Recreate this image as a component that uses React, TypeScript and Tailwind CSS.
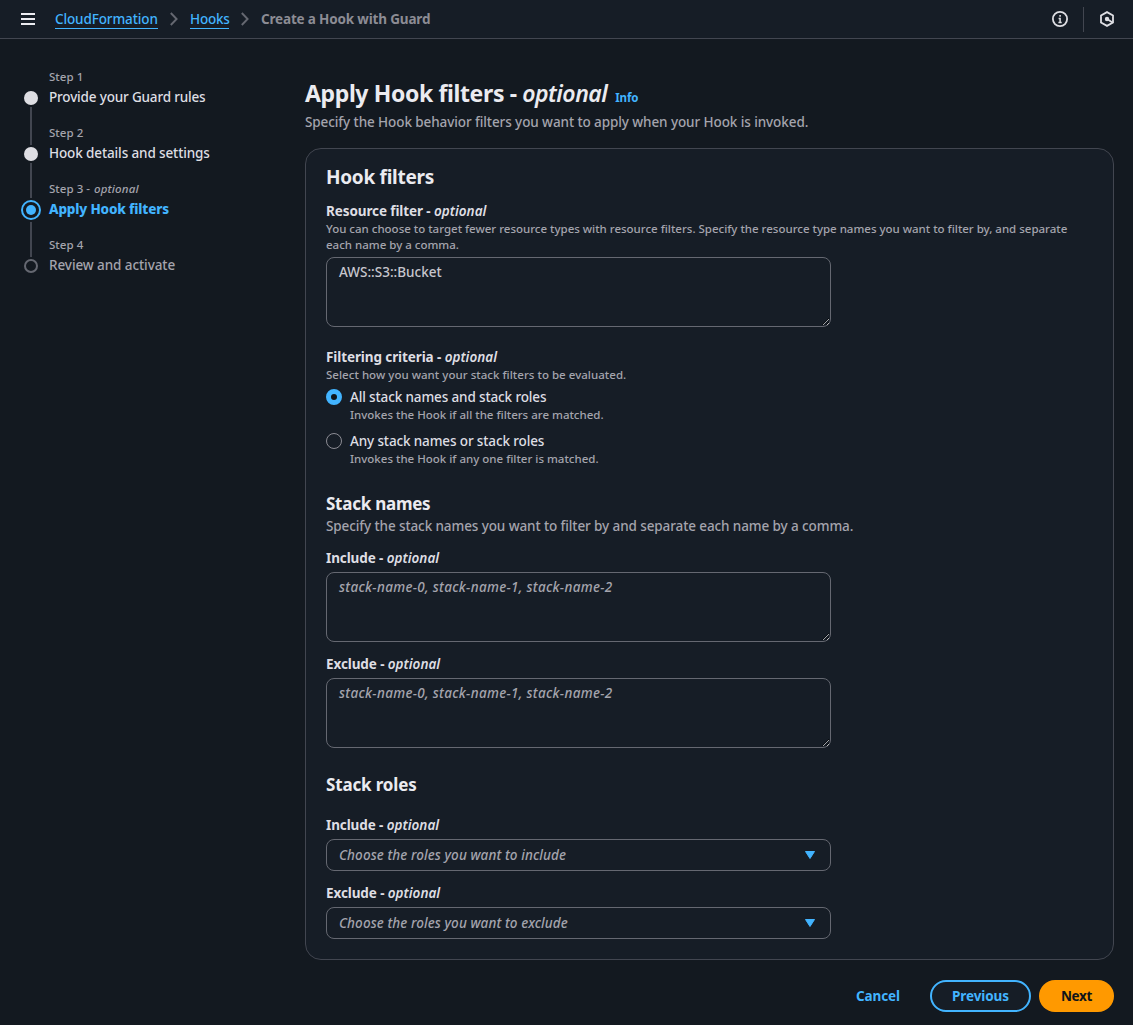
import type { ReactNode } from "react";

function Chevron() {
  return (
    <svg width="8" height="14" viewBox="0 0 8 14" fill="none" stroke="#656871" strokeWidth="1.9">
      <path d="M.8 1l5.8 6-5.8 6" />
    </svg>
  );
}

function Header() {
  return (
    <header className="flex h-[39px] shrink-0 items-center border-b border-[#424650] bg-[#161d26] text-[13.5px] leading-5">
      <button className="ml-[21px] flex w-[14px] flex-col gap-[3px]" aria-label="Open navigation">
        <span className="h-[2px] bg-[#ebebf0]" />
        <span className="h-[2px] bg-[#ebebf0]" />
        <span className="h-[2px] bg-[#ebebf0]" />
      </button>
      <nav className="ml-5 flex items-center">
        <a className="h-5 w-[103px] whitespace-nowrap border-b border-[#42b4ff] font-medium leading-5 tracking-[-0.12px] text-[#42b4ff]">
          CloudFormation
        </a>
        <span className="ml-[12px]">
          <Chevron />
        </span>
        <a className="ml-[12px] h-5 w-[39px] whitespace-nowrap border-b border-[#42b4ff] font-medium leading-5 tracking-[-0.22px] text-[#42b4ff]">
          Hooks
        </a>
        <span className="ml-[12px]">
          <Chevron />
        </span>
        <span className="ml-[12px] whitespace-nowrap font-bold tracking-[-0.17px] text-[#8c8c94]">Create a Hook with Guard</span>
      </nav>
      <div className="ml-auto flex h-full items-center">
        <svg width="16" height="16" viewBox="0 0 16 16" fill="none" stroke="#dedee3" strokeWidth="1.8">
          <circle cx="8" cy="8" r="7.1" />
          <path d="M8.1 12V7.6H6.6" strokeWidth="1.5" />
          <path d="M6.4 11.6h3.3M8.1 4v1.8" strokeWidth="1.5" />
        </svg>
        <span className="ml-[15px] h-[25px] w-px bg-[#424650]" />
        <svg className="ml-[15px] mr-[18px]" width="16" height="16" viewBox="0 0 16 16" fill="none" stroke="#dedee3" strokeWidth="1.8">
          <path d="M8 1.1l6 3.4v7l-6 3.4-6-3.4v-7z" />
          <circle cx="8" cy="8" r="2.2" fill="#dedee3" stroke="none" />
          <path d="M8.5 8.3l5 3.2" />
        </svg>
      </div>
    </header>
  );
}

function Step({ label, optional, children }: { label: string; optional?: boolean; children: ReactNode }) {
  return (
    <li className="h-14">
      <div className="text-[11.5px] font-medium leading-4 tracking-[0.04px] text-[#a4a4ad]">
        {label}
        {optional && (
          <>
            {" - "}
            <em className="ml-px tracking-[0.14px]">optional</em>
          </>
        )}
      </div>
      <div className="mt-0.5 whitespace-nowrap text-[13.5px] leading-5">{children}</div>
    </li>
  );
}

function Steps() {
  return (
    <aside className="flex w-[284px] shrink-0 gap-2 pt-[30px]">
      <div className="flex w-5 flex-col items-center gap-[2px] pt-[22px]">
        <span className="size-[14px] shrink-0 rounded-full bg-[#dedee3]" />
        <span className="h-[38px] w-[2px] bg-[#424650]" />
        <span className="size-[14px] shrink-0 rounded-full bg-[#dedee3]" />
        <span className="h-[35px] w-[2px] bg-[#424650]" />
        <span className="flex size-5 shrink-0 items-center justify-center rounded-full border-2 border-[#42b4ff]">
          <span className="size-[10px] rounded-full bg-[#42b4ff]" />
        </span>
        <span className="h-[35px] w-[2px] bg-[#424650]" />
        <span className="size-[14px] shrink-0 rounded-full border-2 border-[#656871]" />
      </div>
      <ol>
        <Step label="Step 1">
          <span className="font-medium tracking-[-0.17px] text-[#dedee3]">Provide your Guard rules</span>
        </Step>
        <Step label="Step 2">
          <span className="font-medium tracking-[-0.12px] text-[#dedee3]">Hook details and settings</span>
        </Step>
        <Step label="Step 3" optional>
          <span className="font-extrabold tracking-[-0.16px] text-[#42b4ff]">Apply Hook filters</span>
        </Step>
        <Step label="Step 4">
          <span className="font-medium tracking-[-0.08px] text-[#a4a4ad]">Review and activate</span>
        </Step>
      </ol>
    </aside>
  );
}

function FieldLabel({ children }: { children: string }) {
  return (
    <div className="whitespace-nowrap text-[13.5px] font-bold leading-5 tracking-[-0.1px] text-[#dedee3]">
      {children} - <em className="font-semibold tracking-[0.02px]">optional</em>
    </div>
  );
}

function TextArea({ value, placeholder }: { value?: string; placeholder?: string }) {
  return (
    <textarea
      className="block h-[70px] w-[505px] resize rounded-lg border border-[#656871] bg-[#161d26] px-3 py-1 text-[13.5px] font-medium leading-5 text-[#c6c6cd] placeholder:italic placeholder:tracking-[0.31px] placeholder:text-[#a4a4ad]"
      defaultValue={value}
      placeholder={placeholder}
      spellCheck={false}
    />
  );
}

function Select({ children }: { children: string }) {
  return (
    <button className="flex h-8 w-[505px] items-center justify-between rounded-lg border border-[#656871] pl-3 pr-[15px] text-[13.5px] font-medium italic leading-5 tracking-[0.09px] text-[#a4a4ad]">
      {children}
      <svg width="10" height="8" viewBox="0 0 10 8" fill="#42b4ff" stroke="#42b4ff" strokeWidth="1" strokeLinejoin="round">
        <path d="M.5.5h9L5 7.5z" />
      </svg>
    </button>
  );
}

function Radio({ label, description, checked }: { label: string; description: string; checked?: boolean }) {
  return (
    <label className="flex gap-2">
      {checked ? (
        <span className="mt-0.5 size-4 rounded-full border-[5px] border-[#42b4ff] bg-[#0f141a]" />
      ) : (
        <span className="mt-0.5 size-4 rounded-full border border-[#8c8c94]" />
      )}
      <span>
        <span className="block text-[13.5px] font-medium leading-5 tracking-[-0.13px] text-[#dedee3]">{label}</span>
        <span className="block text-[11.5px] font-medium leading-4 text-[#a4a4ad]">{description}</span>
      </span>
    </label>
  );
}

export default function App() {
  return (
    <div className="flex h-[1025px] flex-col overflow-hidden bg-[#131920] font-['Noto_Sans',sans-serif]">
      <Header />
      <div className="flex pl-[21px]">
        <Steps />
        <main className="w-[809px] pt-[39px]">
          <h1 className="flex items-baseline whitespace-pre text-[23px] font-bold leading-[30px] tracking-[-0.37px] text-[#ebebf0]">
            {"Apply Hook filters - "}
            <em className="font-semibold tracking-[-0.5px]">optional</em>
            <a className="ml-2 text-[11.5px] leading-4 tracking-[-0.15px] text-[#42b4ff]">Info</a>
          </h1>
          <p className="mt-1 text-[13.5px] font-medium leading-5 tracking-[-0.09px] text-[#a4a4ad]">
            Specify the Hook behavior filters you want to apply when your Hook is invoked.
          </p>
          <section className="mt-4 h-[812px] rounded-2xl border border-[#424650] bg-[#161d26] px-5 pt-4">
            <h2 className="text-[19px] font-bold leading-6 tracking-[-0.28px] text-[#ebebf0]">Hook filters</h2>
            <div className="mt-3">
              <FieldLabel>Resource filter</FieldLabel>
              <p className="mb-1 whitespace-nowrap text-[11.5px] font-medium leading-4 tracking-[-0.006px] text-[#a4a4ad]">
                You can choose to target fewer resource types with resource filters. Specify the resource type names you want to filter by, and separate
                <br />
                each name by a comma.
              </p>
              <TextArea value="AWS::S3::Bucket" />
            </div>
            <div className="mt-5">
              <FieldLabel>Filtering criteria</FieldLabel>
              <p className="text-[11.5px] font-medium leading-4 tracking-[0.03px] text-[#a4a4ad]">Select how you want your stack filters to be evaluated.</p>
              <div className="mt-1 flex flex-col gap-2">
                <Radio checked label="All stack names and stack roles" description="Invokes the Hook if all the filters are matched." />
                <Radio label="Any stack names or stack roles" description="Invokes the Hook if any one filter is matched." />
              </div>
            </div>
            <h3 className="mt-[26px] text-[17px] font-bold leading-[22px] tracking-[-0.25px] text-[#ebebf0]">Stack names</h3>
            <p className="mt-px text-[13.5px] font-medium leading-5 tracking-[-0.1px] text-[#a4a4ad]">
              Specify the stack names you want to filter by and separate each name by a comma.
            </p>
            <div className="mt-3 flex flex-col gap-3">
              <div className="flex flex-col gap-1">
                <FieldLabel>Include</FieldLabel>
                <TextArea placeholder="stack-name-0, stack-name-1, stack-name-2" />
              </div>
              <div className="flex flex-col gap-1">
                <FieldLabel>Exclude</FieldLabel>
                <TextArea placeholder="stack-name-0, stack-name-1, stack-name-2" />
              </div>
            </div>
            <h3 className="mt-[26px] text-[17px] font-bold leading-[22px] tracking-[-0.15px] text-[#ebebf0]">Stack roles</h3>
            <div className="mt-[19px] flex flex-col gap-3">
              <div className="flex flex-col gap-1">
                <FieldLabel>Include</FieldLabel>
                <Select>Choose the roles you want to include</Select>
              </div>
              <div className="flex flex-col gap-1">
                <FieldLabel>Exclude</FieldLabel>
                <Select>Choose the roles you want to exclude</Select>
              </div>
            </div>
          </section>
          <div className="mt-5 flex justify-end text-[13.5px] font-bold leading-5 tracking-[-0.08px]">
            <button className="mr-[30px] text-[#42b4ff]">Cancel</button>
            <button className="mr-2 h-8 w-[101px] rounded-full border-2 border-[#42b4ff] bg-[#161d26] text-[#42b4ff]">Previous</button>
            <button className="h-8 w-[75px] rounded-full bg-[#ff9900] tracking-[-0.3px] text-[#0f141a]">Next</button>
          </div>
        </main>
      </div>
    </div>
  );
}
